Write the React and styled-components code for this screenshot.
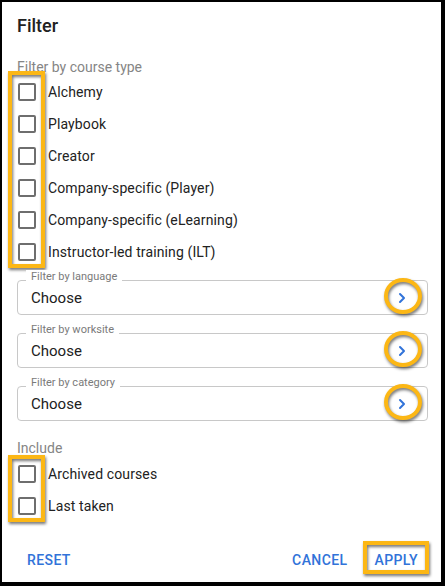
import styled, { createGlobalStyle } from "styled-components";

const naranja = "#fcb715";
const azul = "#3173d9";

const Global = createGlobalStyle`
  html, body {
    margin: 0;
    padding: 0;
    background: #000;
  }
  body {
    font-family: Roboto, "Liberation Sans", sans-serif;
  }
`;

const Dialogo = styled.div`
  box-sizing: border-box;
  width: 445px;
  height: 586px;
  border-style: solid;
  border-color: #000;
  border-width: 2px 4px 4px 2px;
  background: #fff;
  padding: 12px 13px 0 15px;
  display: flex;
  flex-direction: column;
`;

const Titulo = styled.h2`
  margin: 0;
  font-size: 18px;
  font-weight: 500;
  line-height: 24px;
  color: #212121;
`;

const Seccion = styled.div`
  margin-top: ${(p) => p.$arriba}px;
  font-size: 14px;
  line-height: 18px;
  color: #858585;
`;

// marco naranja de anotación, con sombra que sigue al trazo
const Resalte = styled.span`
  position: absolute;
  box-sizing: border-box;
  border: 4px solid ${naranja};
  border-radius: ${(p) => (p.$redondo ? "50%" : "0")};
  filter: drop-shadow(1px 2px 1.5px rgba(0, 0, 0, 0.55));
  pointer-events: none;
`;

const Grupo = styled.div`
  position: relative;
  display: flex;
  flex-direction: column;
  margin-top: ${(p) => p.$separa || 0}px;

  ${Resalte} {
    left: -9px;
    width: 37px;
    top: ${(p) => p.$arriba}px;
    bottom: 0;
  }
`;

const Fila = styled.label`
  height: 32px;
  display: flex;
  align-items: center;
  gap: 12px;
  font-size: 14px;
  letter-spacing: 0.12px;
  color: #222;
`;

const Casilla = styled.span`
  box-sizing: border-box;
  width: 18px;
  height: 18px;
  margin-left: 1px;
  border: 2px solid #6e6e6e;
  border-radius: 2px;
`;

const Campos = styled.div`
  margin-top: 12px;
  display: flex;
  flex-direction: column;
  gap: 18px;
`;

const Campo = styled.div`
  position: relative;
  box-sizing: border-box;
  height: 35px;
  border: 1px solid #c8c8c8;
  border-radius: 4px;
  display: flex;
  align-items: center;
  justify-content: space-between;
  padding: 0 13px;
  font-size: 15px;
  color: #212121;
`;

const Etiqueta = styled.span`
  position: absolute;
  top: -11px;
  left: 8px;
  padding: 0 5px;
  background: #fff;
  font-size: 11px;
  line-height: 14px;
  color: #7a7a7a;
`;

const Flecha = styled.span`
  position: relative;
  width: 24px;
  height: 24px;
  display: flex;
  align-items: center;
  justify-content: center;
  color: ${azul};

  ${Resalte} {
    left: -6px;
    top: -8px;
    width: 38px;
    height: 36px;
  }
`;

const Pie = styled.div`
  margin: 20px 2px 0 2px;
  height: 36px;
  display: flex;
  align-items: center;
`;

const Boton = styled.button`
  position: relative;
  height: 36px;
  padding: 0 8px;
  margin-left: ${(p) => (p.$empuje ? "auto" : "0")};
  margin-right: ${(p) => p.$derecha || 0}px;
  border: none;
  background: none;
  font-family: inherit;
  font-size: 14px;
  font-weight: 500;
  letter-spacing: 0.4px;
  text-transform: uppercase;
  color: ${azul};

  ${Resalte} {
    left: -3px;
    right: -3px;
    top: -1px;
    bottom: 4px;
  }
`;

const tipos = [
  "Alchemy",
  "Playbook",
  "Creator",
  "Company-specific (Player)",
  "Company-specific (eLearning)",
  "Instructor-led training (ILT)",
];

const filtros = ["Filter by language", "Filter by worksite", "Filter by category"];

const Chevron = () => (
  <svg width="8" height="12" viewBox="0 0 8 12" fill="none">
    <path d="M2 2l4 4-4 4" stroke="currentColor" strokeWidth="2" strokeLinecap="round" strokeLinejoin="round" />
  </svg>
);

const App = () => (
  <>
    <Global />
    <Dialogo>
      <Titulo>Filter</Titulo>
      <Seccion $arriba={20}>Filter by course type</Seccion>
      <Grupo $arriba={-5}>
        {tipos.map((t) => (
          <Fila key={t}>
            <Casilla />
            {t}
          </Fila>
        ))}
        <Resalte />
      </Grupo>

      <Campos>
        {filtros.map((f) => (
          <Campo key={f}>
            <Etiqueta>{f}</Etiqueta>
            Choose
            <Flecha>
              <Chevron />
              <Resalte $redondo />
            </Flecha>
          </Campo>
        ))}
      </Campos>

      <Seccion $arriba={17.5}>Include</Seccion>
      <Grupo $arriba={-3} $separa={1}>
        <Fila>
          <Casilla />
          Archived courses
        </Fila>
        <Fila>
          <Casilla />
          Last taken
        </Fila>
        <Resalte />
      </Grupo>

      <Pie>
        <Boton>Reset</Boton>
        <Boton $empuje $derecha={11}>Cancel</Boton>
        <Boton>
          Apply
          <Resalte />
        </Boton>
      </Pie>
    </Dialogo>
  </>
);

export default App;
